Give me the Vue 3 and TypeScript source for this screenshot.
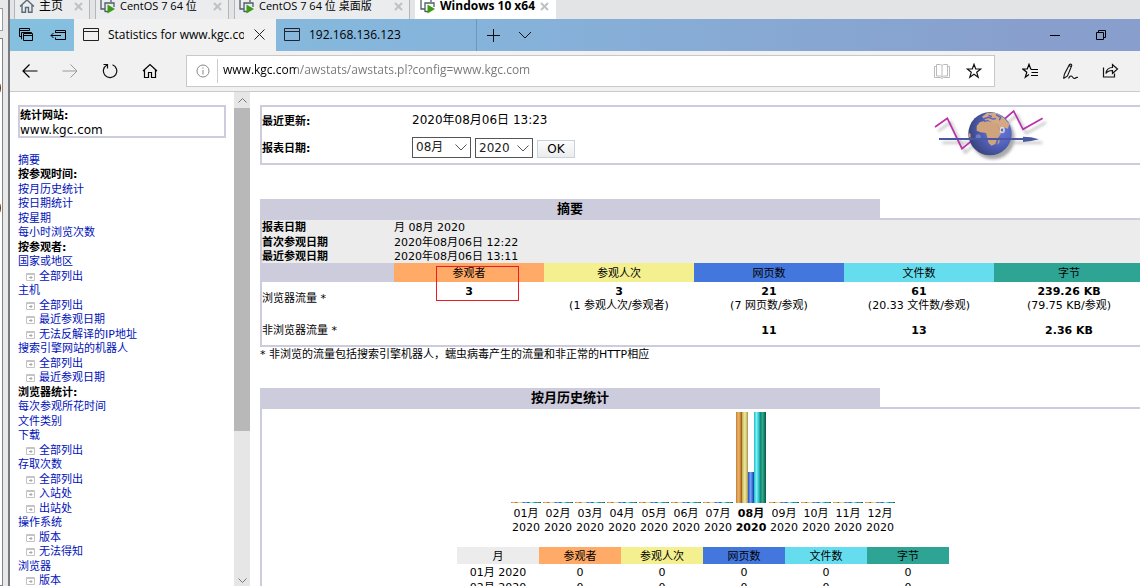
<script setup lang="ts">
import { ref } from 'vue'

interface VmTab { label: string; width: number; home?: boolean; active?: boolean }
interface NavItem { text: string; kind: 'link' | 'head' | 'sub' }
interface Metric { label: string; color: string; main: string; detail: string; other: string }
interface Month { name: string; bars: number[]; current: boolean }

const vmTabs: VmTab[] = [
  { label: '主页', width: 76, home: true },
  { label: 'CentOS 7 64 位', width: 134 },
  { label: 'CentOS 7 64 位 桌面版', width: 176 },
  { label: 'Windows 10 x64', width: 141, active: true },
]

const link = (text: string): NavItem => ({ text, kind: 'link' })
const head = (text: string): NavItem => ({ text, kind: 'head' })
const sub = (text: string): NavItem => ({ text, kind: 'sub' })

const nav: NavItem[] = [
  link('摘要'), head('按参观时间:'), link('按月历史统计'), link('按日期统计'), link('按星期'),
  link('每小时浏览次数'), head('按参观者:'), link('国家或地区'), sub('全部列出'), link('主机'),
  sub('全部列出'), sub('最近参观日期'), sub('无法反解译的IP地址'), link('搜索引擎网站的机器人'),
  sub('全部列出'), sub('最近参观日期'), head('浏览器统计:'), link('每次参观所花时间'),
  link('文件类别'), link('下载'), sub('全部列出'), link('存取次数'), sub('全部列出'),
  sub('入站处'), sub('出站处'), link('操作系统'), sub('版本'), sub('无法得知'),
  link('浏览器'), sub('版本'),
]

const dates = [
  { label: '报表日期', value: '月 08月 2020' },
  { label: '首次参观日期', value: '2020年08月06日 12:22' },
  { label: '最近参观日期', value: '2020年08月06日 13:11' },
]

const metrics: Metric[] = [
  { label: '参观者', color: 'visitors', main: '3', detail: '\u00a0', other: '' },
  { label: '参观人次', color: 'visits', main: '3', detail: '(1 参观人次/参观者)', other: '' },
  { label: '网页数', color: 'pages', main: '21', detail: '(7 网页数/参观)', other: '11' },
  { label: '文件数', color: 'files', main: '61', detail: '(20.33 文件数/参观)', other: '13' },
  { label: '字节', color: 'bytes', main: '239.26 KB', detail: '(79.75 KB/参观)', other: '2.36 KB' },
]

const months: Month[] = Array.from({ length: 12 }, (_, i) => ({
  name: String(i + 1).padStart(2, '0') + '月',
  bars: i === 7 ? [91, 91, 31, 91, 91] : [1, 1, 1, 1, 1],
  current: i === 7,
}))

const address = ref('www.kgc.com/awstats/awstats.pl?config=www.kgc.com')
const month = ref('08月')
const year = ref('2020')
</script>

<template>
  <div class="desktop">
    <aside class="edge">
      <div class="edge-box"></div>
      <div class="edge-list"><i></i><i></i></div>
    </aside>
    <div class="machine">
      <nav class="vm-tabs">
        <button v-for="t in vmTabs" :key="t.label" class="vm-tab" :class="{ active: t.active, home: t.home }" :style="{ width: t.width + 'px' }">
          <svg v-if="t.home" width="16" height="16" viewBox="0 0 16 16" fill="none" stroke="#5a6a78" stroke-width="1.4">
            <path d="M1 8.500 8 2l7 6.500M3 7v7.300h3.500V9.500h3v4.800H13V7" />
          </svg>
          <svg v-else width="16" height="16" viewBox="0 0 16 16">
            <path d="M5 11H1V1h10v3M5 14V5h9v4M5 13.500h3" fill="none" stroke="#4d5c68" stroke-width="1.300" />
            <path d="M7.500 6.500 15 11l-7.500 4.500z" fill="#3c9b14" />
          </svg>
          <span>{{ t.label }}</span>
          <svg class="vm-close" width="9" height="9" viewBox="0 0 9 9" stroke="#bfc1c3" stroke-width="2"><path d="M1 1l7 7M8 1 1 8" /></svg>
        </button>
      </nav>

      <header class="strip">
        <div class="strip-tools">
          <button aria-label="tabs set aside">
            <svg width="16" height="16" viewBox="0 0 16 16" fill="none" stroke="#000"><path d="M3.500 9.500h-2v-8h10v2M1.500 3.500h10M4 12h-.5V5.500h10v1M5.500 6.500h9v7h-9zM5.500 8.500h9" /></svg>
          </button>
          <button aria-label="set tabs aside">
            <svg width="17" height="14" viewBox="0 0 17 14" fill="none" stroke="#000"><path d="M5.500 5V2.500h10v9h-10V9.500M5.500 4.500h10M1 7.500h10M3.500 5 1 7.500 3.500 10" /></svg>
          </button>
        </div>
        <div class="tab current">
          <svg width="17" height="14" viewBox="0 0 17 14" fill="none" stroke="#222"><path d="M.5.500h15v12H.500zM.5 3.500h15" /></svg>
          <span>Statistics for www.kgc.com</span>
          <button aria-label="close tab"><svg width="11" height="11" viewBox="0 0 11 11" stroke="#222"><path d="M.5.500l10 10M10.500.500l-10 10" /></svg></button>
        </div>
        <div class="tab other">
          <svg width="17" height="14" viewBox="0 0 17 14" fill="none" stroke="#223"><path d="M.5.500h15v12H.500zM.5 3.500h15" /></svg>
          <span>192.168.136.123</span>
        </div>
        <button class="plain" aria-label="new tab"><svg width="13" height="13" viewBox="0 0 13 13" stroke="#111"><path d="M6.500 0v13M0 6.500h13" /></svg></button>
        <button class="plain" aria-label="tab list"><svg width="14" height="8" viewBox="0 0 14 8" fill="none" stroke="#111"><path d="M1 1l6 6 6-6" /></svg></button>
        <div class="window-tools">
          <button class="plain" aria-label="minimise"><svg width="10" height="10" viewBox="0 0 10 10" stroke="#000"><path d="M0 5.500h10" /></svg></button>
          <button class="plain" aria-label="restore"><svg width="10" height="10" viewBox="0 0 10 10" fill="none" stroke="#000"><path d="M.5 2.500h7v7h-7zM2.500 2.500v-2h7v7h-2" /></svg></button>
        </div>
      </header>

      <div class="toolbar">
        <div class="nav-tools">
          <button aria-label="back"><svg width="16" height="16" viewBox="0 0 16 16" fill="none" stroke="#000" stroke-width="1.200"><path d="M15.500 8H1M7.500 1.500 1 8l6.500 6.500" /></svg></button>
          <button aria-label="forward"><svg width="16" height="16" viewBox="0 0 16 16" fill="none" stroke="#999"><path d="M.5 8H15M8.500 1.500 15 8l-6.500 6.500" /></svg></button>
          <button aria-label="refresh"><svg width="16" height="16" viewBox="0 0 16 16" fill="none" stroke="#111" stroke-width="1.200"><path d="M5 2A6.700 6.700 0 1 0 10.500 1.700M1.500 1.500H5.500V5.500" /></svg></button>
          <button aria-label="home"><svg width="16" height="16" viewBox="0 0 16 16" fill="none" stroke="#000" stroke-width="1.200"><path d="M1 8 8 1.500 15 8M2.500 7v7.500h4V9.500h3v5h4V7" /></svg></button>
        </div>
        <div class="address">
          <svg class="info" width="14" height="14" viewBox="0 0 14 14" fill="none" stroke="#888"><circle cx="7" cy="7" r="6" /><path d="M7 6v4.500M7 3.500v1.200" /></svg>
          <input v-model="address" aria-label="address" type="text" spellcheck="false" />
          <button aria-label="reading view"><svg width="16" height="15" viewBox="0 0 16 15" fill="none" stroke="#bbb"><path d="M2.500 2.500h-2v11h6l1.500 1 1.500-1h6v-11h-2M2.500.500h4l1.500 1 1.500-1h4v11.500h-4l-1.500 1-1.500-1h-4zM8 1.500V13" /></svg></button>
          <button aria-label="favourite"><svg width="16" height="16" viewBox="0 0 16 16" fill="none" stroke="#111" stroke-width="1.200"><path d="M8 1.300 9.700 6h5L10.700 9.200l1.500 5L8 11.300l-4.200 2.900 1.500-5L1.300 6h5z" /></svg></button>
        </div>
        <div class="page-tools">
          <button aria-label="hub"><svg width="17" height="16" viewBox="0 0 17 16" fill="none" stroke="#000" stroke-width="1.200"><path d="M9.500 6H8.700L7 1.300 5.300 6H.8l4 3.200-1.500 5L7 11.500M9 6.500h7M9.500 9.500H16M9 12.500h7" /></svg></button>
          <button aria-label="notes"><svg width="17" height="17" viewBox="0 0 17 17" fill="none" stroke="#111" stroke-width="1.100"><path d="M1.500 15.500 2.500 11 7.500 1.500Q9.500.500 9.800 2.500L5.500 13 1.500 15.500M7 2.500l2.500 1.200M6.500 15.500C8 12.500 9.500 12.500 10.500 14s2 2 3 1 1.500-.8 2.500-.5" /></svg></button>
          <button aria-label="share"><svg width="17" height="16" viewBox="0 0 17 16" fill="none" stroke="#111" stroke-width="1.200"><path d="M1.500 4.500v9.500h11V10.500M4 10.500C4.500 6 7 4.500 10.500 4.500V1.500l5 4.500-5 4.500V7.500C7.500 7.500 5.500 8 4 10.500z" /></svg></button>
        </div>
      </div>

      <div class="frames">
        <aside class="side">
          <div class="site"><b>统计网站:</b><span>www.kgc.com</span></div>
          <ul>
            <li v-for="(n, i) in nav" :key="i" :class="n.kind">
              <svg v-if="n.kind === 'sub'" width="9" height="8" viewBox="0 0 9 8" fill="none" stroke="#c4c4c4"><path d="M.5.500h8v7h-8zM1 1.500h7" /><path d="M3 4.500h3M4.500 3l1.500 1.500L4.500 6" stroke="#a8a8a8" /></svg>
              <b v-if="n.kind === 'head'">{{ n.text }}</b>
              <a v-else href="#">{{ n.text }}</a>
            </li>
          </ul>
        </aside>
        <div class="scroll">
          <div class="up"><svg width="9" height="5" viewBox="0 0 9 5" fill="none" stroke="#777"><path d="M.5 4.500l4-4 4 4" /></svg></div>
          <div class="thumb"></div>
          <div class="track"></div>
          <div class="down"><svg width="9" height="5" viewBox="0 0 9 5" fill="none" stroke="#777"><path d="M.5.500l4 4 4-4" /></svg></div>
        </div>

        <main>
          <form class="frame info-box" @submit.prevent>
            <div class="fields">
              <b>最近更新:</b><span>2020年08月06日 13:23</span>
              <b>报表日期:</b>
              <div class="controls">
                <span class="pick month"><select v-model="month" aria-label="月"><option>08月</option></select>
                  <svg width="12" height="7" viewBox="0 0 12 7" fill="none" stroke="#555"><path d="M.5.500 6 6 11.500.500" /></svg></span>
                <span class="pick year"><select v-model="year" aria-label="年"><option>2020</option></select>
                  <svg width="12" height="7" viewBox="0 0 12 7" fill="none" stroke="#555"><path d="M.5.500 6 6 11.500.500" /></svg></span>
                <button type="submit">OK</button>
              </div>
            </div>
            <div class="logo">
              <svg width="120" height="56" viewBox="90 51 360 168" fill="none">
                <defs>
                  <radialGradient id="sea" cx=".7" cy=".4" r=".8">
                    <stop offset="0" stop-color="#6b7ade" /><stop offset=".45" stop-color="#5262bd" /><stop offset="1" stop-color="#343c6e" />
                  </radialGradient>
                  <filter id="soft" x="-20%" y="-20%" width="140%" height="140%"><feGaussianBlur stdDeviation="4" /></filter>
                  <clipPath id="disc"><circle cx="270" cy="131" r="65" /></clipPath>
                </defs>
                <g filter="url(#soft)" opacity=".5">
                  <path d="M115 123 152 97l44 91 22-19M326 96l25-21 28 55 59-33M127 158h300" stroke="#777" stroke-width="6" />
                  <circle cx="279" cy="143" r="65" fill="#555" />
                </g>
                <path d="M105 111 142 85l44 91 30-24M310 90l31-27 28 55 59-33" stroke="#bb2fae" stroke-width="5" />
                <circle cx="270" cy="131" r="65" fill="url(#sea)" />
                <g clip-path="url(#disc)">
                  <path d="M230 108l10-12 18-4 20 4 14 4 6 20 8 6-8 12-8 12-4 12-12 5-8-8-4-16-4-14-16-2-12-5z" fill="#cfa47c" />
                  <path d="M246 80 262 68l28 1 22 15 16 18-4 14-14-4-10 8-8-18-14-2-8-8-10 3z" fill="#d3a882" />
                  <path d="M250 87l16-5 12 5 10-1M288 74l14 8-4 9M266 76l10 4M252 94l14-3" stroke="#5364c9" stroke-width="4" />
                  <path d="M294 152l6-8-2 14-6 6zM206 128l6 4v12l-6-4z" fill="#c79b74" />
                </g>
                <ellipse cx="307" cy="120" rx="8" ry="10" fill="#fff" opacity=".6" /><path d="M306 116v8" stroke="#444" stroke-width="4" />
                <circle cx="235" cy="141" r="8" fill="#9aa3dc" opacity=".5" />
                <path d="M117 147H372" stroke="#4b57a3" stroke-width="6" />
                <path d="M369 140l24 2 24 6-24 5-24 3z" fill="#4b57a3" />
              </svg>
            </div>
          </form>

          <section class="summary">
            <h2>摘要</h2>
            <div class="frame">
              <table class="totals">
                <colgroup><col class="first" /><col v-for="m in metrics" :key="m.label" /></colgroup>
                <tbody>
                  <tr v-for="d in dates" :key="d.label" class="date"><th>{{ d.label }}</th><td colspan="5">{{ d.value }}</td></tr>
                  <tr class="names">
                    <td class="blank"></td>
                    <th v-for="(m, i) in metrics" :key="m.label" :class="m.color">{{ m.label }}<div v-if="i === 0" class="mark"></div></th>
                  </tr>
                  <tr class="viewed"><td>浏览器流量 *</td><td v-for="m in metrics" :key="m.label"><b>{{ m.main }}</b><br />{{ m.detail }}</td></tr>
                  <tr class="unseen"><td>非浏览器流量 *</td><td v-for="m in metrics" :key="m.label"><b>{{ m.other }}</b></td></tr>
                </tbody>
              </table>
            </div>
            <p>* 非浏览的流量包括搜索引擎机器人，蠕虫病毒产生的流量和非正常的HTTP相应</p>
          </section>

          <section class="history">
            <h2>按月历史统计</h2>
            <div class="frame">
              <div class="chart">
                <div v-for="m in months" :key="m.name" class="slot" :class="{ now: m.current }">
                  <div class="bars"><i v-for="(h, i) in m.bars" :key="i" :class="'bar-' + metrics[i].color" :style="{ height: h + 'px' }"></i></div>
                  <span>{{ m.name }}</span><span>2020</span>
                </div>
              </div>
              <table class="monthly">
                <thead><tr><th class="grey">月</th><th v-for="m in metrics" :key="m.label" :class="m.color">{{ m.label }}</th></tr></thead>
                <tbody><tr v-for="m in months.slice(0, 2)" :key="m.name"><td>{{ m.name }} 2020</td><td v-for="x in metrics" :key="x.label">0</td></tr></tbody>
              </table>
            </div>
          </section>
        </main>
      </div>
    </div>
  </div>
</template>

<style>
body { margin: 0; overflow: hidden; background: #fff; }
</style>

<style scoped>
* { box-sizing: border-box; }
.desktop { display: flex; height: 100vh; overflow: hidden; font: 11px/14px "DejaVu Sans", "Noto Sans CJK SC", sans-serif; color: #000; }
button { display: flex; align-items: center; justify-content: center; padding: 0; border: 0; background: none; font: inherit; color: inherit; }
svg { flex: none; display: block; }

.edge { width: 10px; flex: none; background: #e8e8e9; border-right: 2px solid #787b80; display: flex; flex-direction: column; }
.edge-box { width: 3px; height: 23px; margin: 8px 0 7px; background: #fff; border: 1px solid #9a9da2; border-left: 0; }
.edge-list { width: 3px; flex: 1; background: #fff; border: 1px solid #80858c; border-left: 0; }
.edge-list i { display: block; width: 1px; height: 8px; margin-top: 45px; background: linear-gradient(#e8a040, #3a2a48 50%, #e8a040); }
.edge-list i + i { margin-top: 112px; }

.machine { flex: 1; min-width: 0; display: flex; flex-direction: column; }
.vm-tabs { display: flex; gap: 5px; height: 19px; flex: none; padding-left: 4px; overflow: hidden; background: #e3e4e6; font: 11px/12px "Open Sans", "Noto Sans CJK SC", sans-serif; }
.vm-tab { height: 19px; flex: none; justify-content: flex-start; gap: 4px; padding: 0 6px 7px 4px; border: 1px solid #b4b6b9; border-width: 0 1px; background: #ebecee; white-space: nowrap; }
.vm-tab.home { font-size: 12px; }
.vm-tab.active { background: #fff; border-color: #fff; font-size: 12px; font-weight: bold; }
.vm-close { margin-left: auto; }

.strip { display: flex; height: 32px; flex: none; background: linear-gradient(90deg, #85c0df, #86b2da 45%, #889fcd 90%); font: 12px/18px "Open Sans", "Noto Sans CJK SC", sans-serif; }
.strip-tools { display: flex; width: 64px; gap: 16px; justify-content: center; }
.tab { display: flex; align-items: center; width: 202px; padding: 0 10px 1px 9px; gap: 8px; }
.tab.current { background: #f1f1f1; }
.tab.other { width: 201px; padding-left: 8px; border-right: 1px solid #6c98b8; }
.tab span { flex: 1; overflow: hidden; white-space: nowrap; }
.tab button { width: 14px; }
.plain { width: 32px; }
.window-tools { margin-left: auto; display: flex; gap: 14px; padding-right: 23px; }

.toolbar { display: flex; align-items: center; height: 41px; flex: none; padding-left: 12px; background: #f1f1f1; border-bottom: 1px solid #cacaca; }
.nav-tools { display: flex; gap: 24px; margin-right: 28px; }
.nav-tools button { width: 16px; }
.address { display: flex; align-items: center; flex: 1; height: 32px; padding: 0 12px 0 9px; gap: 16px; background: #fff; border: 1px solid #c8c8c8; }
.info { margin-right: -9px; }
.address input { flex: 1; min-width: 0; height: 24px; padding: 0 0 4px 5px; border: 0; border-left: 1px solid #ccc; outline: 0; font: 12px/20px "Open Sans", sans-serif; color: transparent; background: linear-gradient(90deg, #000 78px, #767676 78px); background-clip: text; -webkit-background-clip: text; }
.page-tools { display: flex; gap: 23px; padding: 0 21px 0 27px; }

.frames { flex: 1; min-height: 0; display: flex; overflow: hidden; background: #fff; }
.side { width: 224px; flex: none; padding: 13px 8px 0; overflow: hidden; }
.site { display: flex; flex-direction: column; height: 33px; border: 2px solid #ccccdd; padding-top: 2px; line-height: 14px; }
.site span { font-size: 12px; }
ul { list-style: none; margin: 15px 0 0; padding: 0; }
li { display: flex; align-items: center; height: 14px; line-height: 14px; white-space: nowrap; }
li:nth-child(odd) { height: 15px; }
.sub { padding-left: 8px; gap: 4px; }
a { color: #0011bb; text-decoration: none; }
.scroll { width: 16px; flex: none; display: flex; flex-direction: column; background: #e6e6e6; }
.up, .down { height: 16px; flex: none; display: flex; align-items: center; justify-content: center; }
.down { height: 11px; }
.thumb { flex: 9; background: #b8b8b8; }
.track { flex: 4; }

main { flex: 1; min-width: 0; padding: 13px 0 0 10px; overflow: hidden; }
main > * { margin-right: -6px; }
.frame { border: 2px solid #ccccdd; }
.info-box { display: flex; height: 60px; }
.fields { display: grid; grid-template-columns: 150px 1fr; grid-template-rows: 26px 28px; align-items: center; flex: 1; font-size: 12px; }
.fields > b { font-size: 11px; padding-top: 3px; }
.controls { display: flex; align-items: flex-end; gap: 4px; }
.pick { position: relative; display: flex; }
.pick svg { position: absolute; right: 4px; top: 7px; }
select { appearance: none; width: 59px; height: 21px; padding: 0 0 0 3px; border: 1px solid #555; border-radius: 0; background: #fff; font: 12px/18px "DejaVu Sans", "Noto Sans CJK SC", sans-serif; color: #222; }
.year select { width: 58px; height: 20px; }
.controls button { width: 38px; height: 18px; border: 1px solid #c3d3e0; background: linear-gradient(#fcfcfc, #ececec); font-size: 12px; }
.logo { width: 308px; display: flex; justify-content: center; }

h2 { width: 70%; height: 19px; margin: 0; background: #ccccdd; font-size: 13px; line-height: 20px; text-align: center; }
.summary { margin-top: 34px; }
.history { margin-top: 26px; }
p { margin: 0; padding-top: 1px; }
table { border-collapse: collapse; }
th, td { padding: 2px 0 0; font-weight: normal; line-height: 12px; }
.totals { width: 100%; table-layout: fixed; text-align: center; }
.first { width: 132px; }
.totals td:first-child { text-align: left; }
.date { height: 14px; background: #ececec; text-align: left; }
.date:nth-child(2) { height: 15px; }
.date th { font-weight: bold; text-align: left; }
.names { height: 19px; }
.names th { position: relative; }
.blank { background: #ccccdd; }
.mark { position: absolute; left: 42px; top: 3px; width: 83px; height: 35px; border: 1px solid #ed1c24; }
.viewed { height: 32px; }
.viewed td { line-height: 14px; }
.unseen { height: 31px; }
.visitors { background: #ffaa66; }
.visits { background: #f4f090; }
.pages { background: #4477dd; }
.files { background: #66ddee; }
.bytes { background: #2ea495; }
.grey { background: #ececec; }

.chart { display: flex; justify-content: center; padding-top: 3px; }
.slot { display: flex; flex-direction: column; align-items: center; width: 32px; }
.slot.now { width: 34px; font-weight: bold; }
.bars { display: flex; align-items: flex-end; height: 91px; margin-bottom: 4px; }
.bars i { width: 6px; }
.bar-visitors { background: linear-gradient(90deg, #c47a24, #e9b26e 35%, #dca058 60%, #945608); }
.bar-visits { background: linear-gradient(90deg, #c0ac50, #ece29a 40%, #e0d88c 65%, #9c9444); }
.bar-pages { background: linear-gradient(90deg, #2454c4, #7ca4f4 45%, #3c70dc 70%, #0c40a0); }
.bar-files { background: linear-gradient(90deg, #18bcc8, #84f0f4 40%, #4cd8e0 65%, #109ca4); }
.bar-bytes { background: linear-gradient(90deg, #0c8468, #34a890 45%, #208870 65%, #005c40); }
.monthly { table-layout: fixed; width: 492px; margin: 12px auto 0; text-align: center; }
.monthly thead tr { height: 17px; }
.monthly tbody tr { height: 15px; }
</style>
